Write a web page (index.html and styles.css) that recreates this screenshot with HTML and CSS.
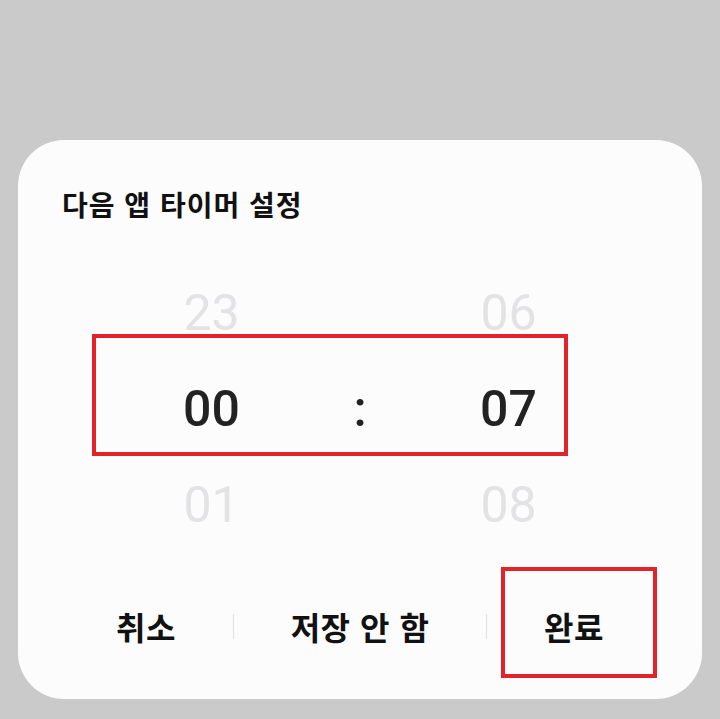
FILE: index.html
```html
<!DOCTYPE html>
<html lang="ko">
	<head>
		<title>앱 타이머</title>
		<meta charset="utf-8">
		<meta name="viewport" content="width=device-width, initial-scale=1">
		<link rel="stylesheet" href="styles.css">
	</head>

	<body>
		<div class="dialog">
			<div class="title">다음 앱 타이머 설정</div>

			<div class="picker">
				<div class="cell dim">23</div>
				<div class="cell"></div>
				<div class="cell dim">06</div>

				<div class="cell current">00</div>
				<div class="cell sep">:</div>
				<div class="cell current">07</div>

				<div class="cell dim">01</div>
				<div class="cell"></div>
				<div class="cell dim">08</div>
			</div>

			<div class="actions">
				<div class="btn btn-side">취소</div>
				<div class="divider"></div>
				<div class="btn btn-mid">저장 안 함</div>
				<div class="divider"></div>
				<div class="btn btn-side">완료</div>
			</div>

			<!-- highlight frames -->
			<div class="mark mark-time"></div>
			<div class="mark mark-done"></div>
		</div>
	</body>
</html>
```

FILE: styles.css
```css
body {
	margin: 0;
	background-color: #cacaca;
	width: 720px;
	height: 719px;
	overflow: hidden;
	font-family: "Noto Sans CJK KR", "Noto Sans", sans-serif;
}

.dialog {
	position: relative;
	box-sizing: border-box;
	margin: 140px 0 0 18px;
	width: 684px;
	height: 559px;
	background-color: #fcfcfc;
	border-radius: 46px;
	padding-top: 46px;
}

.title {
	padding-left: 44px;
	font-size: 28px;
	letter-spacing: 1px;
	line-height: 36px;
	font-weight: 700;
	color: #111;
}

.picker {
	margin-top: 43px;
	display: grid;
	grid-template-columns: 140px 157px 140px;
	grid-auto-rows: 96px;
	justify-content: center;
	font-family: Roboto, "Noto Sans", sans-serif;
	font-size: 50px;
	line-height: 96px;
	text-align: center;
}

.cell.dim {
	color: #e3e3e6;
}

.cell.current {
	color: #222;
	font-weight: 500;
}

.cell.sep {
	color: #222;
	font-weight: 500;
}

.actions {
	margin-top: 43px;
	display: flex;
	align-items: center;
	padding-left: 41px;
	height: 60px;
}

.btn {
	text-align: center;
	font-size: 32px;
	letter-spacing: 0.5px;
	font-weight: 700;
	color: #111;
	line-height: 60px;
}

.btn-side {
	width: 174px;
}

.btn-mid {
	width: 252px;
}

.divider {
	width: 1px;
	height: 25px;
	background-color: #e2e2e2;
}

.mark {
	position: absolute;
	box-sizing: border-box;
	border: 4px solid #e3232a;
}

.mark-time {
	left: 74px;
	top: 194px;
	width: 476px;
	height: 122px;
}

.mark-done {
	left: 483px;
	top: 427px;
	width: 156px;
	height: 111px;
}
```
